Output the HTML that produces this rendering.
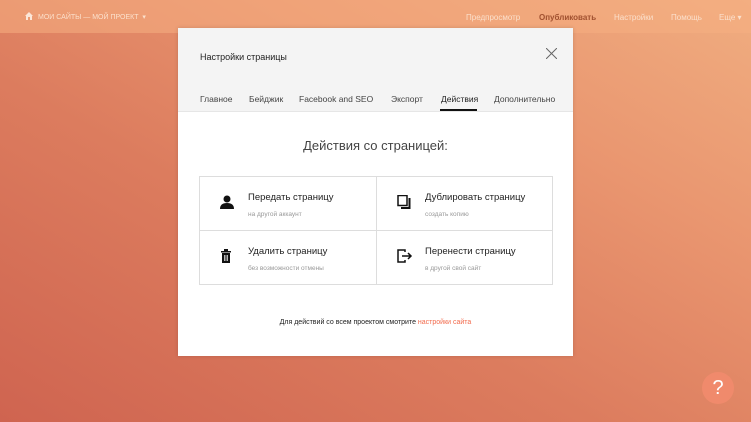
<!DOCTYPE html>
<html><head><meta charset="utf-8"><style>
*{margin:0;padding:0;box-sizing:border-box}
body{width:751px;height:422px;overflow:hidden;position:relative;font-family:"Liberation Sans","Noto Sans CJK SC",sans-serif;background:linear-gradient(30deg,#cf6450 0%,#dc7c5e 40%,#e9956f 70%,#f0ad80 100%)}
.top{position:absolute;left:0;top:0;width:751px;height:33px;background:rgba(245,175,130,.55);font-size:8px;color:#fbe0cc}
.top span{position:absolute;top:13px}
.modal{position:absolute;left:178px;top:28px;width:395px;height:328px;background:#fff;box-shadow:0 0 4px rgba(0,0,0,.15)}
.hdr{height:84px;background:#f4f4f4;border-bottom:1px solid #e6e6e6;position:relative}
.title{position:absolute;left:22px;top:24px;font-size:9px;color:#222}
.tabs span{position:absolute;top:66px;font-size:8.5px;color:#444}
.h{position:absolute;top:110px;width:100%;text-align:center;font-size:13px;color:#444}
.grid{position:absolute;left:21px;top:148px;width:354px;height:109px;border:1px solid #ddd}
.cell{position:absolute;width:176px;height:54px}
.cell b{position:absolute;left:48px;top:15px;font-weight:normal;font-size:9.5px;color:#222}
.cell i{position:absolute;left:48px;top:34px;font-style:normal;font-size:6.5px;color:#999}
.cell svg{position:absolute;left:20px;top:18px}
.foot{position:absolute;top:291px;width:100%;text-align:center;font-size:7px;color:#222}
</style></head><body>
<div class="top">
<svg style="position:absolute;left:25px;top:12px" width="8" height="8"><path d="M4 0L8 4H7V8H5V5H3V8H1V4H0Z" fill="#fbe6d8"/></svg>
<span style="left:38px;font-size:7px">МОИ САЙТЫ — МОЙ ПРОЕКТ &nbsp;▾</span>
<span style="left:466px">Предпросмотр</span>
<span style="left:539px;color:#a0502f;font-weight:bold">Опубликовать</span>
<span style="left:614px">Настройки</span>
<span style="left:671px">Помощь</span>
<span style="left:719px">Еще ▾</span>
</div>
<div class="modal">
<div class="hdr">
<div class="title">Настройки страницы</div>
<svg style="position:absolute;left:368px;top:20px" width="11" height="11"><path d="M0 0L11 11M11 0L0 11" stroke="#666" stroke-width="1"/></svg>
<div class="tabs">
<span style="left:22px">Главное</span>
<span style="left:71px">Бейджик</span>
<span style="left:121px">Facebook and SEO</span>
<span style="left:213px">Экспорт</span>
<span style="left:263px;color:#222">Действия</span>
<span style="left:316px">Дополнительно</span>
</div>
<div style="position:absolute;left:262px;top:81px;width:37px;height:2px;background:#111"></div>
</div>
<div class="h">Действия со страницей:</div>
<div class="grid">
<div style="position:absolute;left:176px;top:0;width:1px;height:107px;background:#ddd"></div>
<div style="position:absolute;left:0;top:53px;width:352px;height:1px;background:#ddd"></div>
<div class="cell" style="left:0;top:0"><svg width="14" height="14"><circle cx="7" cy="4" r="3.5" fill="#111"/><path d="M0 14Q0 8 7 8Q14 8 14 14Z" fill="#111"/></svg><b>Передать страницу</b><i>на другой аккаунт</i></div>
<div class="cell" style="left:177px;top:0"><svg width="14" height="14"><rect x="1" y="0.5" width="9" height="10" fill="none" stroke="#111" stroke-width="1.5"/><path d="M4 13H12.5V3" fill="none" stroke="#111" stroke-width="2"/></svg><b>Дублировать страницу</b><i>создать копию</i></div>
<div class="cell" style="left:0;top:54px"><svg width="14" height="14"><rect x="1" y="2" width="10" height="1.5" fill="#111"/><rect x="4" y="0" width="4" height="2" fill="#111"/><rect x="2" y="4" width="8" height="10" fill="#111"/><path d="M4.5 6V12M6 6V12M7.5 6V12" stroke="#fff" stroke-width=".7"/></svg><b>Удалить страницу</b><i>без возможности отмены</i></div>
<div class="cell" style="left:177px;top:54px"><svg width="16" height="14"><path d="M8 3V1H1V13H8V11" fill="none" stroke="#111" stroke-width="1.5"/><path d="M5 7H14M11 4L14 7L11 10" fill="none" stroke="#111" stroke-width="1.5"/></svg><b>Перенести страницу</b><i>в другой свой сайт</i></div>
</div>
<div class="foot">Для действий со всем проектом смотрите <span style="color:#f26b4d">настройки сайта</span></div>
</div>
<div style="position:absolute;left:702px;top:372px;width:32px;height:32px;border-radius:50%;background:#f08a6c;color:#fff;font-size:20px;text-align:center;line-height:32px">?</div>
</body></html>
